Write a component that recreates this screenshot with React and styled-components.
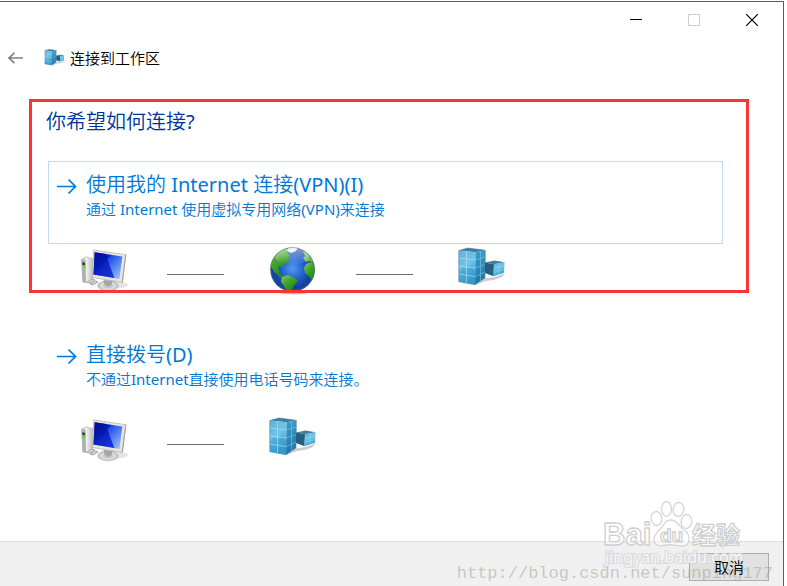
import React from "react";
import styled, { createGlobalStyle } from "styled-components";

const GlobalStyle = createGlobalStyle`
  *, *::before, *::after { box-sizing: border-box; }
  body {
    margin: 0;
    background: #fff;
    color: #000;
    font-family: "Noto Sans", "Noto Sans CJK SC DemiLight", "Noto Sans CJK SC", sans-serif;
    font-size: 15px;
    line-height: 20px;
  }
  button { font: inherit; color: inherit; margin: 0; cursor: pointer; }
  h1, h2, p { margin: 0; font-weight: inherit; }
  svg { display: block; }
`;

const Page = styled.div`
  min-height: 100vh;
  display: flex;
  padding: 1px 3px 0 0;
`;

const Dialog = styled.main`
  flex: 1;
  min-width: 0;
  display: flex;
  flex-direction: column;
  border: solid #1c6ea4;
  border-width: 1px 1px 0 0;
`;

const TitleBar = styled.div`
  display: flex;
  justify-content: flex-end;
  padding-right: 2px;
`;

const CaptionButton = styled.button`
  width: 58px;
  height: 36px;
  padding: 0;
  border: 0;
  background: none;
  display: grid;
  place-items: center;
  color: ${(p) => (p.disabled ? "#cccccc" : "#000")};
`;

const Header = styled.header`
  display: flex;
  align-items: center;
  height: 40px;
  padding-left: 8px;
  gap: 6px;
`;

const BackButton = styled.button`
  width: 30px;
  height: 20px;
  padding: 0;
  border: 0;
  background: none;
  color: #808080;
  display: flex;
  align-items: center;
`;

const DialogTitle = styled.h1`
  font-size: 15px;
  line-height: 20px;
`;

const Content = styled.div`
  flex: 1;
  padding: 21px 34px 20px 29px;
`;

const Highlight = styled.section`
  position: relative;
  padding: 3px 26px 0 19px;
  height: 194px;
  &::after {
    content: "";
    position: absolute;
    inset: 0;
    border: 3px solid #fb3434;
    pointer-events: none;
  }
`;

const Plain = styled.section`
  padding: 38px 26px 0 19px;
`;

const Question = styled.h2`
  margin: 5px 0 24px -2px;
  font-size: 20px;
  line-height: 30px;
  color: #003399;
`;

const OptionButton = styled.button`
  display: grid;
  grid-template-columns: 29px 1fr;
  column-gap: 8px;
  align-content: start;
  width: 100%;
  height: 83px;
  padding: 8px 0 0 0;
  border: 1px solid ${(p) => (p.$selected ? "#bcdcf4" : "transparent")};
  background: none;
  color: #0078d7;
  text-align: left;
`;

const OptionArrow = styled.span`
  padding: 8px 0 0 8px;
`;

const OptionTitle = styled.span`
  display: block;
  font-size: 20px;
  line-height: 30px;
`;

const OptionNote = styled.span`
  display: block;
  font-size: 15px;
  line-height: 18px;
`;

const Route = styled.div`
  display: flex;
  align-items: center;
  padding: 3px 0 0 32px;
`;

const Link = styled.span`
  width: 57px;
  height: 1px;
  margin: 7px 45px 0 39px;
  background: #6b6b6b;
`;

const Footer = styled.footer`
  position: relative;
  display: flex;
  justify-content: flex-end;
  height: 45px;
  padding: 11px 14px 0;
  border-top: 1px solid #dfdfdf;
  background: #f0f0f0;
`;

const CancelButton = styled.button`
  width: 80px;
  height: 28px;
  padding: 0;
  border: 1px solid #adadad;
  background: #e1e1e1;
`;

const CancelLabel = styled.span`
  position: relative;
  z-index: 2;
`;

const SourceMark = styled.span`
  position: absolute;
  right: 10px;
  bottom: 2px;
  z-index: 1;
  font: 17px/20px "Liberation Mono", monospace;
  color: rgba(150, 150, 135, 0.45);
  pointer-events: none;
`;

const LogoMark = styled.svg`
  position: absolute;
  right: 38px;
  bottom: 12px;
  z-index: 1;
  pointer-events: none;
`;

function Arrow({ size }) {
  return (
    <svg width={size} height="18" viewBox="0 0 20 18" fill="none" stroke="currentColor" strokeWidth="1.7">
      <path d="M0 8.5H18.5M11.5 1.5L18.5 8.5L11.5 15.5" />
    </svg>
  );
}

function Computer({ id }) {
  return (
    <svg width="48" height="48" viewBox="0 0 48 48" role="img" aria-label="计算机">
      <defs>
        <linearGradient id={`${id}-screen`} x1="0" y1="0" x2="1" y2="0.9">
          <stop offset="0" stopColor="#0010a8" />
          <stop offset="0.38" stopColor="#0420c8" />
          <stop offset="0.4" stopColor="#1d4be6" />
          <stop offset="1" stopColor="#9cc4fb" />
        </linearGradient>
        <linearGradient id={`${id}-dark`} x1="0" y1="0" x2="0.6" y2="1">
          <stop offset="0" stopColor="#000c8c" />
          <stop offset="1" stopColor="#0b22d4" />
        </linearGradient>
        <linearGradient id={`${id}-case`} x1="0" x2="1">
          <stop offset="0" stopColor="#a9a9a9" />
          <stop offset="0.4" stopColor="#f4f4f4" />
          <stop offset="1" stopColor="#bdbdbd" />
        </linearGradient>
        <radialGradient id={`${id}-foot`}>
          <stop offset="0" stopColor="#a9acae" />
          <stop offset="0.65" stopColor="#dedfe0" />
          <stop offset="1" stopColor="#b8b8b8" />
        </radialGradient>
      </defs>
      <ellipse cx="36" cy="38" rx="12" ry="3.5" fill="#000" opacity="0.1" />
      <path d="M6 35l6-3 3 1-5 3zM10 37l6-3 2 1-5 3z" fill="#d8d8d8" stroke="#8b8b8b" strokeWidth=".7" />
      <path d="M1.6 12.3L6.6 9.9 12.6 11.6 12.6 32 5.4 35.6 2.8 35z" fill={`url(#${id}-case)`} stroke="#a8a8a8" strokeWidth=".6" />
      <path d="M1.6 12.3L5.6 13.2 6 35.2 2.8 35z" fill="#b0b0b0" />
      <path d="M2.2 15.2L5 15.7 5.1 18.6 2.4 18.1z" fill="#3b403b" />
      <path d="M2.4 18.3L5.2 18.8 5.3 20.9 2.5 20.4z" fill="#58dc1c" />
      <ellipse cx="28" cy="38.8" rx="10.3" ry="5" fill={`url(#${id}-foot)`} stroke="#b8b8b8" strokeWidth=".6" />
      <path d="M23.5 33L32.5 34 31.5 38Q28 39.5 24.5 37.5z" fill="#a2a5a7" />
      <path d="M13.6 3L45.8 7.7 42.3 35.4 12.6 30.5z" fill="#e9e6e1" stroke="#b0aea9" strokeWidth=".7" />
      <path d="M14.7 5.3L42.4 9.5 39.4 31.9 13.5 27.5z" fill={`url(#${id}-screen)`} />
      <path d="M14.7 5.3L26 7Q29 18 34.5 31L13.5 27.5z" fill={`url(#${id}-dark)`} opacity=".85" />
      <path d="M45.8 7.7L42.3 35.4" stroke="#989898" strokeWidth=".9" />
    </svg>
  );
}

function Globe() {
  return (
    <svg width="48" height="48" viewBox="0 0 48 48" role="img" aria-label="Internet">
      <defs>
        <radialGradient id="sea" cx="0.5" cy="0.48" r="0.55">
          <stop offset="0" stopColor="#4f9af2" />
          <stop offset="0.45" stopColor="#2360cf" />
          <stop offset="0.8" stopColor="#123f9f" />
          <stop offset="1" stopColor="#335b96" />
        </radialGradient>
        <linearGradient id="land" x1="0" y1="0" x2="0.7" y2="1">
          <stop offset="0" stopColor="#93c97c" />
          <stop offset="0.45" stopColor="#43a529" />
          <stop offset="1" stopColor="#1d8113" />
        </linearGradient>
        <linearGradient id="gloss" x1="0" y1="0" x2="0" y2="1">
          <stop offset="0" stopColor="#fff" stopOpacity=".55" />
          <stop offset="1" stopColor="#fff" stopOpacity="0" />
        </linearGradient>
        <clipPath id="ball"><circle cx="23.5" cy="22.5" r="22.3" /></clipPath>
      </defs>
      <ellipse cx="25" cy="45" rx="15" ry="2.5" fill="#000" opacity=".25" />
      <g clipPath="url(#ball)">
        <circle cx="23.5" cy="22.5" r="22.3" fill="url(#sea)" />
        <path d="M0 20L3 10 10 3 19 2 18 6 21 8 19 12 21 15 16 16 14 20 10 19 9 22 11 24 10 26 14 28 16 31 12 31 8 27 5 25 3 21z" fill="url(#land)" />
        <path d="M20 0H29L27 4 22 6 18 4z" fill="#e2efe9" />
        <path d="M13 30L19 28 24 30 29 34 25 38 23 43 18 45 15 39 12 35z" fill="url(#land)" />
        <path d="M34 4L39 6 45 13 46 17 41 14 37 15 34 11 36 9z" fill="#74b95c" />
        <path d="M37 17L42 15 47 19 47 29 43 34 40 29 36 26 35 21z" fill="url(#land)" />
        <ellipse cx="23" cy="9" rx="17" ry="9" fill="url(#gloss)" />
      </g>
      <circle cx="23.5" cy="22.5" r="22" fill="none" stroke="#3d6b70" strokeWidth=".6" opacity=".7" />
    </svg>
  );
}

function Servers({ id, size = 48, label = "工作区", viewBox = "0 0 48 48" }) {
  return (
    <svg width={size} height={size} viewBox={viewBox} role="img" aria-label={label}>
      <defs>
        <linearGradient id={`${id}-front`} x1="0" y1="0" x2="0.4" y2="1">
          <stop offset="0" stopColor="#67b0d4" />
          <stop offset="0.5" stopColor="#6cc5ea" />
          <stop offset="1" stopColor="#3a9fd0" />
        </linearGradient>
        <linearGradient id={`${id}-side`} x1="0" y1="0" x2="0" y2="1">
          <stop offset="0" stopColor="#3c9ccb" />
          <stop offset="1" stopColor="#2074a5" />
        </linearGradient>
      </defs>
      <path d="M17 38L28 31 37 30 47 26 44 30 36 33 28 34z" opacity=".2" />
      <path d="M.8 3.5L10 1 27.3 3.3 17.5 5.2z" fill="#3b7f9f" />
      <path d="M.8 3.5L17.5 5.2 17 37.7.8 34.7z" fill={`url(#${id}-front)`} />
      <path d="M17.5 5.2L27.3 3.3 27 31 17 37.7z" fill={`url(#${id}-side)`} />
      <path d="M1 25L5 20 9 22 13 19 17 25V37L1 34z" fill="#268fc8" opacity=".35" />
      <path d="M8.5 4.2V36.2M.8 11L17.3 13M.8 19L17.2 21M.8 27L17.1 29.5" stroke="#b9e3f3" strokeWidth=".9" opacity=".7" />
      <path d="M22.5 4.3V34M17.3 13L27.2 10M17.2 21L27.1 17.5M17.1 29.5L27 25" stroke="#8ed0eb" strokeWidth=".8" opacity=".65" />
      <path d="M.8 3.5L10 1 27.3 3.3 27 31 17 37.7.8 34.7z" fill="none" stroke="#447b94" strokeWidth=".6" />
      <path d="M27 15.5L36.5 13.6 46.6 15.2 36 17.2z" fill="#477f98" />
      <path d="M27 15.5L36 17.2 35.5 29.2 27 26z" fill="#245f80" />
      <path d="M36 17.2L46.6 15.2 46 25.8 35.5 29.2z" fill={`url(#${id}-front)`} />
      <path d="M36 21L46.4 19M36 25.5L46 22.5M41 16.5V27.5" fill="none" stroke="#a8d9ec" strokeWidth=".7" opacity=".7" />
    </svg>
  );
}

function BaiduMark() {
  return (
    <LogoMark width="145" height="78" viewBox="0 0 145 78" aria-hidden="true">
      <g fill="#ffffff" fillOpacity=".55" stroke="#cfcfcf" strokeWidth="1.3" strokeOpacity=".85">
        <ellipse cx="56.5" cy="22.5" rx="5.3" ry="7" transform="rotate(-8 56.5 22.5)" />
        <ellipse cx="66.5" cy="13" rx="5" ry="7.3" />
        <ellipse cx="78.5" cy="13.5" rx="5.3" ry="7" transform="rotate(8 78.5 13.5)" />
        <ellipse cx="86.5" cy="25.5" rx="5.3" ry="7" transform="rotate(6 86.5 25.5)" />
        <path d="M71 24C77 24 79 30 84 34C91 39 91 50 82 50C77 50 73 48 67 49C61 50 54 51 54 43C54 37 61 34 64 28C66 25 68 24 71 24z" />
      </g>
      <g fill="#ffffff" fillOpacity=".55" stroke="#cfcfcf" strokeWidth="1.3" fontWeight="700">
        <text x="3" y="49" fontSize="31" fontFamily="Liberation Sans, sans-serif">Bai</text>
        <text x="60" y="46" fontSize="19" fontFamily="Liberation Sans, sans-serif">du</text>
        <text x="92" y="48" fontSize="24" fontFamily="Noto Sans CJK SC, sans-serif">经验</text>
      </g>
      <text x="5" y="67" fontSize="16" fontFamily="Noto Sans, sans-serif" fill="#fff" fillOpacity=".8" stroke="#d8d8d8" strokeWidth="2" paintOrder="stroke">
        jingyan.baidu.com
      </text>
    </LogoMark>
  );
}

function Option({ selected, title, note }) {
  return (
    <OptionButton type="button" $selected={selected}>
      <OptionArrow><Arrow size="20" /></OptionArrow>
      <span>
        <OptionTitle>{title}</OptionTitle>
        <OptionNote>{note}</OptionNote>
      </span>
    </OptionButton>
  );
}

export default function App() {
  return (
    <Page>
      <GlobalStyle />
      <Dialog>
        <TitleBar>
          <CaptionButton type="button" aria-label="最小化">
            <svg width="12" height="12" viewBox="0 0 12 12"><path d="M0 5.5H12" stroke="currentColor" /></svg>
          </CaptionButton>
          <CaptionButton type="button" aria-label="最大化" disabled>
            <svg width="12" height="12" viewBox="0 0 12 12"><path d="M.5 .5H11.5V11.5H.5z" fill="none" stroke="currentColor" /></svg>
          </CaptionButton>
          <CaptionButton type="button" aria-label="关闭">
            <svg width="12" height="12" viewBox="0 0 12 12"><path d="M0 0L12 12M12 0L0 12" stroke="currentColor" strokeWidth="1.2" /></svg>
          </CaptionButton>
        </TitleBar>
        <Header>
          <BackButton type="button" aria-label="返回">
            <svg width="16" height="12" viewBox="0 0 16 12" fill="none" stroke="currentColor" strokeWidth="1.6">
              <path d="M15 6H1M6.5 .8L1 6L6.5 11.2" />
            </svg>
          </BackButton>
          <Servers id="small" size={20} label="" viewBox="-1 -2 46 46" />
          <DialogTitle>连接到工作区</DialogTitle>
        </Header>
        <Content>
          <Highlight>
            <Question>你希望如何连接?</Question>
            <Option selected title="使用我的 Internet 连接(VPN)(I)" note="通过 Internet 使用虚拟专用网络(VPN)来连接" />
            <Route>
              <Computer id="pc1" />
              <Link />
              <Globe />
              <Link />
              <Servers id="work1" />
            </Route>
          </Highlight>
          <Plain>
            <Option title="直接拨号(D)" note="不通过Internet直接使用电话号码来连接。" />
            <Route>
              <Computer id="pc2" />
              <Link />
              <Servers id="work2" />
            </Route>
          </Plain>
        </Content>
        <Footer>
          <CancelButton type="button"><CancelLabel>取消</CancelLabel></CancelButton>
          <BaiduMark />
          <SourceMark aria-hidden="true">http://blog.csdn.net/sunping177</SourceMark>
        </Footer>
      </Dialog>
    </Page>
  );
}
